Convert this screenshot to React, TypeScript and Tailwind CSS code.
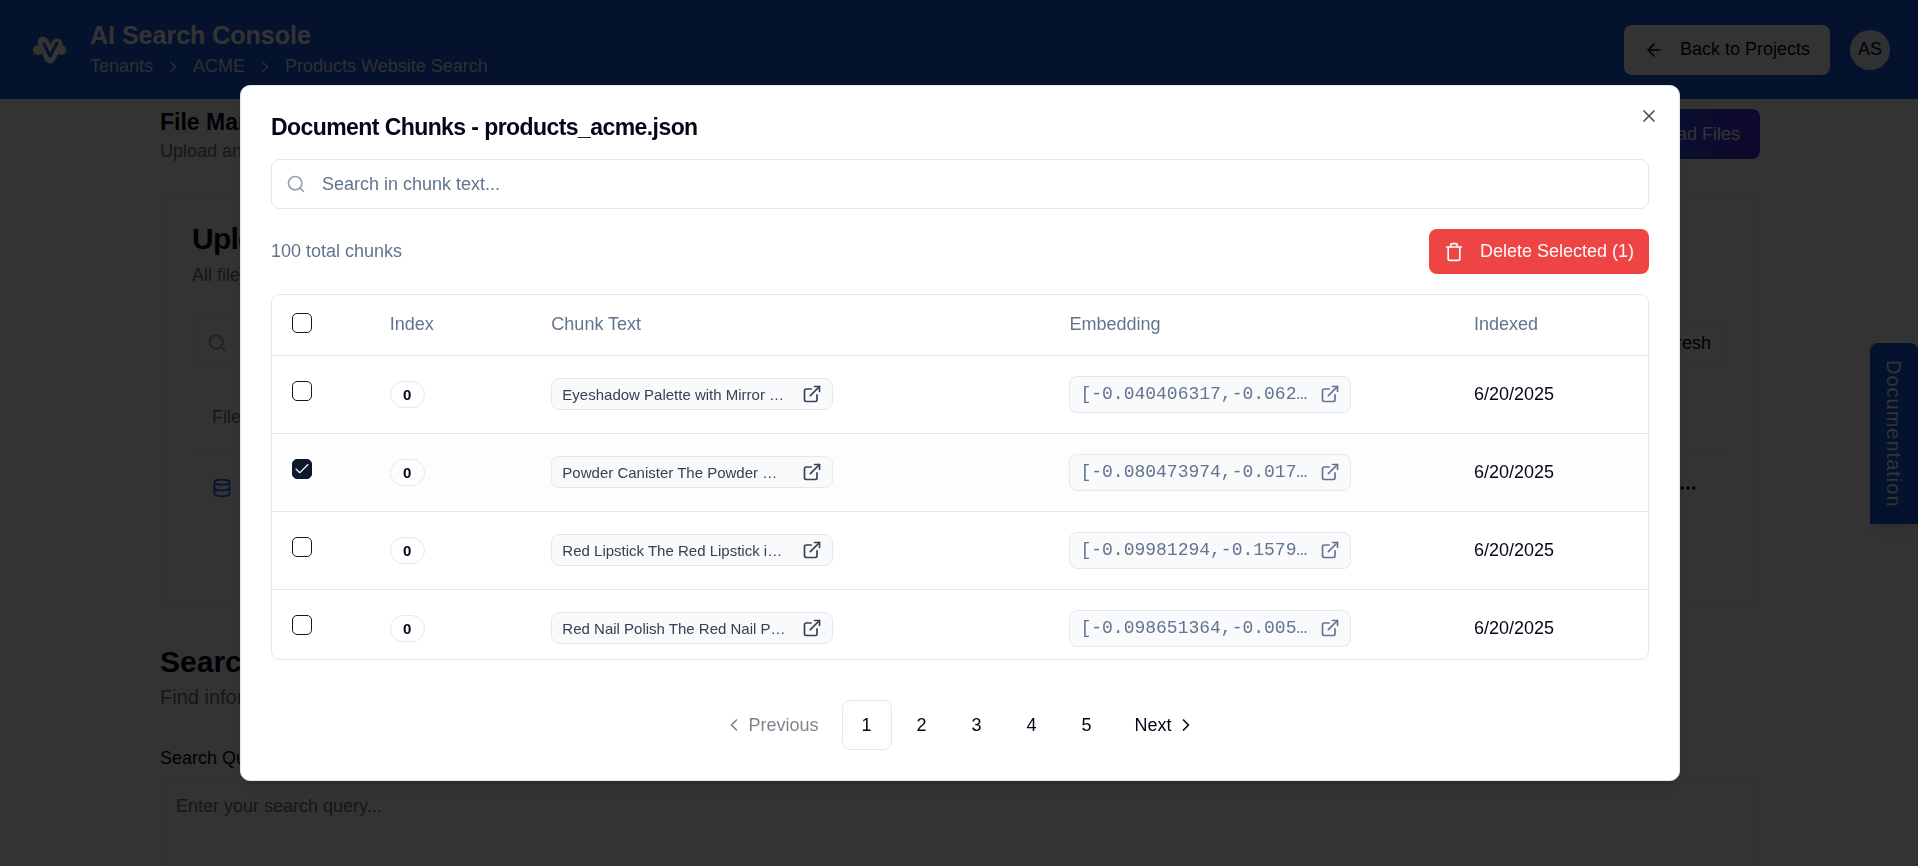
import { useState } from "react";
import {
  ArrowLeft,
  Check,
  ChevronLeft,
  ChevronRight,
  Database,
  Ellipsis,
  ExternalLink,
  RefreshCw,
  Search,
  Trash,
  Upload,
  X,
} from "lucide-react";

type Chunk = {
  id: string;
  index: number;
  text: string;
  embedding: string;
  indexed: string;
};

const CHUNKS: Chunk[] = [
  {
    id: "eyeshadow-palette",
    index: 0,
    text: "Eyeshadow Palette with Mirror …",
    embedding: "[-0.040406317,-0.062…",
    indexed: "6/20/2025",
  },
  {
    id: "powder-canister",
    index: 0,
    text: "Powder Canister The Powder …",
    embedding: "[-0.080473974,-0.017…",
    indexed: "6/20/2025",
  },
  {
    id: "red-lipstick",
    index: 0,
    text: "Red Lipstick The Red Lipstick i…",
    embedding: "[-0.09981294,-0.1579…",
    indexed: "6/20/2025",
  },
  {
    id: "red-nail-polish",
    index: 0,
    text: "Red Nail Polish The Red Nail P…",
    embedding: "[-0.098651364,-0.005…",
    indexed: "6/20/2025",
  },
];

const PAGES = [1, 2, 3, 4, 5];

const Logo = () => (
  <svg aria-hidden="true" className="h-10 w-10" viewBox="0 0 40 40">
    <g fill="#1e7f95">
      <circle cx="25" cy="13" r="7" />
      <circle cx="6" cy="21" r="5" />
      <circle cx="33" cy="21" r="5" />
    </g>
    <g fill="#fff">
      <circle cx="8" cy="20" r="5" />
      <circle cx="31" cy="20" r="5" />
      <circle cx="26" cy="14" r="4" />
    </g>
    <path
      d="M13 12 20 28 27 14"
      fill="none"
      stroke="#fff"
      strokeLinecap="round"
      strokeLinejoin="round"
      strokeWidth="11"
    />
    <path
      d="M14 14 20 26 27 13"
      fill="none"
      stroke="#1859e0"
      strokeLinecap="round"
      strokeLinejoin="round"
      strokeWidth="3"
    />
  </svg>
);

const Checkbox = ({
  checked,
  label,
  onChange,
}: {
  checked: boolean;
  label: string;
  onChange: () => void;
}) => (
  <span className="relative block h-5 w-5">
    <input
      aria-label={label}
      checked={checked}
      className="peer block h-5 w-5 appearance-none rounded-[5px] border border-slate-900 checked:bg-slate-900"
      onChange={onChange}
      type="checkbox"
    />
    <Check
      className="pointer-events-none absolute inset-px hidden h-[18px] w-[18px] text-slate-50 peer-checked:block"
      strokeWidth={1.5}
    />
  </span>
);

const PageHeader = () => (
  <header className="flex h-[99px] items-center justify-between bg-[#1859e0] pr-7 pl-[30px]">
    <div className="flex items-center gap-5">
      <Logo />
      <div>
        <h1 className="text-[25px] leading-[30px] font-bold text-white">
          AI Search Console
        </h1>
        <nav
          aria-label="Breadcrumb"
          className="mt-1 flex items-center gap-[10px] text-[18px] leading-[25px] text-blue-100"
        >
          <a href="#tenants">Tenants</a>
          <ChevronRight className="h-5 w-5" strokeWidth={1.5} />
          <a href="#acme">ACME</a>
          <ChevronRight className="h-5 w-5" strokeWidth={1.5} />
          <a href="#search">Products Website Search</a>
        </nav>
      </div>
    </div>
    <div className="flex items-center gap-5">
      <button
        className="flex h-[50px] items-center gap-4 rounded-lg bg-white px-5 text-[18px] text-slate-950"
        type="button"
      >
        <ArrowLeft className="h-5 w-5" />
        Back to Projects
      </button>
      <button
        className="h-10 w-10 rounded-full bg-slate-100 text-[18px] text-slate-950"
        type="button"
      >
        AS
      </button>
    </div>
  </header>
);

const UploadedFilesCard = () => (
  <section className="mt-[30px] h-[409px] rounded-[10px] border border-slate-200 px-[31px] pt-[26px]">
    <h3 className="text-[30px] leading-[36px] font-bold tracking-tight">
      Uploaded Files
    </h3>
    <p className="mt-[6px] text-[18px] leading-[25px] text-slate-500">
      All files uploaded to this project
    </p>
    <div className="mt-[30px] flex items-center justify-between">
      <div className="flex h-[50px] w-[480px] items-center gap-4 rounded-lg border border-slate-200 px-[14px]">
        <Search className="h-5 w-5 shrink-0 text-gray-400" />
        <input
          aria-label="Search files"
          className="w-full text-[18px] outline-none placeholder:text-slate-500"
          placeholder="Search files..."
        />
      </div>
      <button
        className="flex h-[45px] items-center gap-4 rounded-lg border border-slate-200 px-4 text-[18px]"
        type="button"
      >
        <RefreshCw className="h-5 w-5" />
        Refresh
      </button>
    </div>
    <table className="mt-5 w-full text-left text-[18px]">
      <thead>
        <tr className="h-[60px] border-b border-slate-200 text-slate-500">
          <th className="px-5 font-normal" scope="col">
            File Name
          </th>
          <th className="px-5 font-normal" scope="col" />
        </tr>
      </thead>
      <tbody>
        <tr className="h-20">
          <td className="px-5">
            <span className="flex items-center gap-3">
              <Database className="h-5 w-5 text-blue-600" />
              products_acme.json
            </span>
          </td>
          <td>
            <button
              aria-label="File actions"
              className="ml-auto flex h-10 w-20 items-center justify-center"
              type="button"
            >
              <Ellipsis className="h-5 w-5" />
            </button>
          </td>
        </tr>
      </tbody>
    </table>
  </section>
);

const ProjectPage = () => (
  <div className="h-screen overflow-hidden bg-white text-slate-950">
    <PageHeader />
    <div className="pl-0.5">
      <main className="mx-auto max-w-[1600px]">
        <div className="flex items-start justify-between pt-[10px]">
          <div>
            <h2 className="text-[23px] leading-[26px] font-bold">
              File Management
            </h2>
            <p className="mt-1 text-[18px] leading-[25px] text-slate-500">
              Upload and manage your files
            </p>
          </div>
          <button
            className="flex h-[50px] items-center gap-4 rounded-lg bg-linear-to-r from-blue-600 to-indigo-700 px-5 text-[18px] text-white"
            type="button"
          >
            <Upload className="h-5 w-5" />
            Upload Files
          </button>
        </div>

        <UploadedFilesCard />

        <section className="mt-10">
          <h2 className="text-[30px] leading-[38px] font-bold">Search</h2>
          <p className="mt-1 text-[20px] leading-[25px] text-slate-500">
            Find information in your documents
          </p>
          <label
            className="mt-9 block text-[18px] leading-[25px]"
            htmlFor="query"
          >
            Search Query
          </label>
          <textarea
            className="mt-3 block h-[125px] w-full resize-none rounded-lg border border-slate-200 px-[15px] py-[10px] text-[18px] leading-[25px] outline-none placeholder:text-slate-500"
            id="query"
            placeholder="Enter your search query..."
          />
        </section>
      </main>
    </div>
    <button
      className="fixed top-[343px] right-0 h-[181px] w-12 rounded-t-lg bg-[#1859e0] text-[20px] tracking-wider text-white shadow-lg [writing-mode:vertical-rl]"
      type="button"
    >
      Documentation
    </button>
  </div>
);

const ChunkTable = ({
  onToggle,
  onToggleAll,
  selected,
}: {
  onToggle: (id: string) => void;
  onToggleAll: () => void;
  selected: string[];
}) => (
  <div className="min-h-0 flex-1 overflow-hidden rounded-lg border border-slate-200">
    <table className="w-full table-fixed text-left text-[18px] leading-[25px]">
      <colgroup>
        <col className="w-[7.1%]" />
        <col className="w-[11.75%]" />
        <col className="w-[37.65%]" />
        <col className="w-[29.4%]" />
        <col />
      </colgroup>
      <thead>
        <tr className="h-[60px] border-b border-slate-200 text-slate-500">
          <th className="px-5 pb-1" scope="col">
            <Checkbox
              checked={selected.length === CHUNKS.length}
              label="Select all chunks"
              onChange={onToggleAll}
            />
          </th>
          <th className="px-5 font-normal" scope="col">
            Index
          </th>
          <th className="px-5 font-normal" scope="col">
            Chunk Text
          </th>
          <th className="px-5 font-normal" scope="col">
            Embedding
          </th>
          <th className="px-5 font-normal" scope="col">
            Indexed
          </th>
        </tr>
      </thead>
      <tbody>
        {CHUNKS.map((chunk) => {
          const isSelected = selected.includes(chunk.id);

          return (
            <tr
              key={chunk.id}
              className={`h-[78px] border-b border-slate-200 ${isSelected ? "bg-[#fdfdfe]" : ""}`}
            >
              <td className="px-5 pb-[6px]">
                <Checkbox
                  checked={isSelected}
                  label={`Select ${chunk.text}`}
                  onChange={() => onToggle(chunk.id)}
                />
              </td>
              <td className="px-5">
                <span className="flex h-[27px] w-[35px] items-center justify-center rounded-full border border-slate-200 text-[15px] font-bold">
                  {chunk.index}
                </span>
              </td>
              <td className="px-5">
                <button
                  className="flex h-8 w-full max-w-[282px] items-center justify-between rounded-lg border border-gray-200 bg-slate-50 px-[10px] text-[15px] text-gray-700"
                  type="button"
                >
                  <span className="truncate">{chunk.text}</span>
                  <ExternalLink className="h-5 w-5 shrink-0" />
                </button>
              </td>
              <td className="px-5">
                <button
                  className="flex h-[37px] w-full max-w-[282px] items-center justify-between rounded-lg border border-gray-200 bg-slate-50 px-[10px] text-slate-500"
                  type="button"
                >
                  <span className="font-['Liberation_Mono',monospace]">
                    {chunk.embedding}
                  </span>
                  <ExternalLink className="h-5 w-5 shrink-0" />
                </button>
              </td>
              <td className="px-5">{chunk.indexed}</td>
            </tr>
          );
        })}
      </tbody>
    </table>
  </div>
);

const Pagination = () => (
  <nav
    aria-label="Pagination"
    className="mt-10 flex items-center justify-center gap-[5px] text-[18px]"
  >
    <button
      className="flex h-[50px] items-center gap-1 pr-[18px] pl-3 opacity-50"
      disabled
      type="button"
    >
      <ChevronLeft className="h-5 w-5" />
      Previous
    </button>
    {PAGES.map((page) => (
      <button
        key={page}
        aria-current={page === 1 ? "page" : undefined}
        className={`h-[50px] w-[50px] rounded-lg border ${page === 1 ? "border-slate-200" : "border-transparent"}`}
        type="button"
      >
        {page}
      </button>
    ))}
    <button
      className="flex h-[50px] items-center gap-1 pr-3 pl-[18px]"
      type="button"
    >
      Next
      <ChevronRight className="h-5 w-5" />
    </button>
  </nav>
);

const DocumentChunksDialog = () => {
  const [selected, setSelected] = useState<string[]>(["powder-canister"]);

  const toggle = (id: string) =>
    setSelected((current) =>
      current.includes(id)
        ? current.filter((entry) => entry !== id)
        : [...current, id],
    );

  const toggleAll = () =>
    setSelected((current) =>
      current.length === CHUNKS.length ? [] : CHUNKS.map((chunk) => chunk.id),
    );

  return (
    <div className="fixed inset-0 flex justify-center bg-black/80 py-[85px] pr-5 pl-[22px]">
      <div
        aria-labelledby="dialog-title"
        aria-modal="true"
        className="relative flex w-full max-w-[1440px] flex-col rounded-[10px] border border-slate-200 bg-white p-[30px] text-slate-950 shadow-lg"
        role="dialog"
      >
        <h2
          className="text-[23px] leading-[23px] font-bold tracking-tight"
          id="dialog-title"
        >
          Document Chunks - products_acme.json
        </h2>
        <button
          aria-label="Close"
          className="absolute top-5 right-5 opacity-70"
          type="button"
        >
          <X className="h-5 w-5" />
        </button>

        <div className="mt-5 flex h-[50px] shrink-0 items-center gap-4 rounded-lg border border-slate-200 px-[14px]">
          <Search className="h-5 w-5 shrink-0 text-gray-400" />
          <input
            aria-label="Search in chunk text"
            className="w-full text-[18px] outline-none placeholder:text-slate-500"
            placeholder="Search in chunk text..."
          />
        </div>

        <div className="my-5 flex items-center justify-between text-[18px]">
          <p className="text-slate-500">100 total chunks</p>
          <button
            className="flex h-[45px] items-center gap-4 rounded-lg bg-[#ef4444] px-[15px] text-slate-50"
            type="button"
          >
            <Trash className="h-5 w-5" />
            Delete Selected ({selected.length})
          </button>
        </div>

        <ChunkTable
          onToggle={toggle}
          onToggleAll={toggleAll}
          selected={selected}
        />
        <Pagination />
      </div>
    </div>
  );
};

export default function App() {
  return (
    <div className="font-['Liberation_Sans',Arial,sans-serif]">
      <ProjectPage />
      <DocumentChunksDialog />
    </div>
  );
}
